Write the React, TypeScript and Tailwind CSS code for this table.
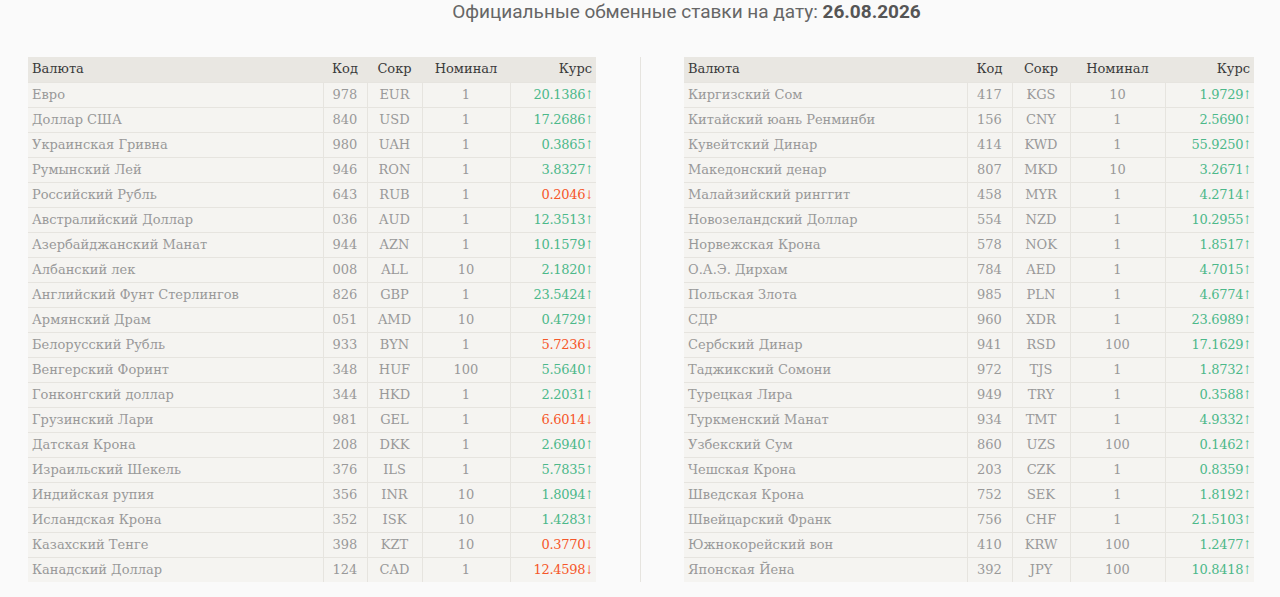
import React from "react";

type Row = [string, string, string, string, string, boolean];

const left: Row[] = [
  ["Евро", "978", "EUR", "1", "20.1386", true],
  ["Доллар США", "840", "USD", "1", "17.2686", true],
  ["Украинская Гривна", "980", "UAH", "1", "0.3865", true],
  ["Румынский Лей", "946", "RON", "1", "3.8327", true],
  ["Российский Рубль", "643", "RUB", "1", "0.2046", false],
  ["Австралийский Доллар", "036", "AUD", "1", "12.3513", true],
  ["Азербайджанский Манат", "944", "AZN", "1", "10.1579", true],
  ["Албанский лек", "008", "ALL", "10", "2.1820", true],
  ["Английский Фунт Стерлингов", "826", "GBP", "1", "23.5424", true],
  ["Армянский Драм", "051", "AMD", "10", "0.4729", true],
  ["Белорусский Рубль", "933", "BYN", "1", "5.7236", false],
  ["Венгерский Форинт", "348", "HUF", "100", "5.5640", true],
  ["Гонконгский доллар", "344", "HKD", "1", "2.2031", true],
  ["Грузинский Лари", "981", "GEL", "1", "6.6014", false],
  ["Датская Крона", "208", "DKK", "1", "2.6940", true],
  ["Израильский Шекель", "376", "ILS", "1", "5.7835", true],
  ["Индийская рупия", "356", "INR", "10", "1.8094", true],
  ["Исландская Крона", "352", "ISK", "10", "1.4283", true],
  ["Казахский Тенге", "398", "KZT", "10", "0.3770", false],
  ["Канадский Доллар", "124", "CAD", "1", "12.4598", false],
];

const right: Row[] = [
  ["Киргизский Сом", "417", "KGS", "10", "1.9729", true],
  ["Китайский юань Ренминби", "156", "CNY", "1", "2.5690", true],
  ["Кувейтский Динар", "414", "KWD", "1", "55.9250", true],
  ["Македонский денар", "807", "MKD", "10", "3.2671", true],
  ["Малайзийский ринггит", "458", "MYR", "1", "4.2714", true],
  ["Новозеландский Доллар", "554", "NZD", "1", "10.2955", true],
  ["Норвежская Крона", "578", "NOK", "1", "1.8517", true],
  ["О.А.Э. Дирхам", "784", "AED", "1", "4.7015", true],
  ["Польская Злота", "985", "PLN", "1", "4.6774", true],
  ["СДР", "960", "XDR", "1", "23.6989", true],
  ["Сербский Динар", "941", "RSD", "100", "17.1629", true],
  ["Таджикский Сомони", "972", "TJS", "1", "1.8732", true],
  ["Турецкая Лира", "949", "TRY", "1", "0.3588", true],
  ["Туркменский Манат", "934", "TMT", "1", "4.9332", true],
  ["Узбекский Сум", "860", "UZS", "100", "0.1462", true],
  ["Чешская Крона", "203", "CZK", "1", "0.8359", true],
  ["Шведская Крона", "752", "SEK", "1", "1.8192", true],
  ["Швейцарский Франк", "756", "CHF", "1", "21.5103", true],
  ["Южнокорейский вон", "410", "KRW", "100", "1.2477", true],
  ["Японская Йена", "392", "JPY", "100", "10.8418", true],
];

function Table({ rows, widths }: { rows: Row[]; widths: string[] }) {
  return (
    <table className="border-collapse table-fixed w-full text-[13px] leading-[24px] [font-family:'DejaVu_Serif',serif]">
      <colgroup>
        {widths.map((w, i) => (
          <col key={i} style={{ width: w }} />
        ))}
      </colgroup>
      <thead>
        <tr className="bg-[#e9e7e2] text-[#3a3a3a] h-[25px]">
          <th className="text-left font-normal pl-[4px]">Валюта</th>
          <th className="font-normal">Код</th>
          <th className="font-normal">Сокр</th>
          <th className="font-normal">Номинал</th>
          <th className="text-right font-normal pr-[4px]">Курс</th>
        </tr>
      </thead>
      <tbody>
        {rows.map((r, i) => (
          <tr key={i} className="bg-[#f5f4f1] text-[#999] h-[25px] border-t border-[#e6e4df]">
            <td className="pl-[4px] text-left whitespace-nowrap overflow-hidden">{r[0]}</td>
            <td className="text-center border-l border-[#e6e4df]">{r[1]}</td>
            <td className="text-center border-l border-[#e6e4df]">{r[2]}</td>
            <td className="text-center border-l border-[#e6e4df]">{r[3]}</td>
            <td
              className={
                "text-right pr-[3px] border-l border-[#e6e4df] tracking-[-0.3px] whitespace-nowrap " +
                (r[5] ? "text-[#4cb88a]" : "text-[#f5572a]")
              }
            >
              {r[4]}
              <span className="inline-block text-[12px] ml-[-1px] mr-[-1px] scale-x-75">
                {r[5] ? "↑" : "↓"}
              </span>
            </td>
          </tr>
        ))}
      </tbody>
    </table>
  );
}

export default function App() {
  return (
    <div className="w-[1280px] h-[597px] bg-[#fafafa] overflow-hidden">
      <h1 className="text-center text-[19px] leading-[24px] pl-[93px] text-[#666] [font-family:Roboto,sans-serif]">
        Официальные обменные ставки на дату: <b className="font-bold text-[#555]">26.08.2026</b>
      </h1>
      <div className="flex mt-[33px] pl-[28px]">
        <div className="w-[568px]">
          <Table rows={left} widths={["295px", "44px", "55px", "88px", "86px"]} />
        </div>
        <div className="w-[88px] flex justify-center">
          <div className="w-px bg-[#e6e4df]" />
        </div>
        <div className="w-[570px]">
          <Table rows={right} widths={["283px", "45px", "58px", "95px", "89px"]} />
        </div>
      </div>
    </div>
  );
}
